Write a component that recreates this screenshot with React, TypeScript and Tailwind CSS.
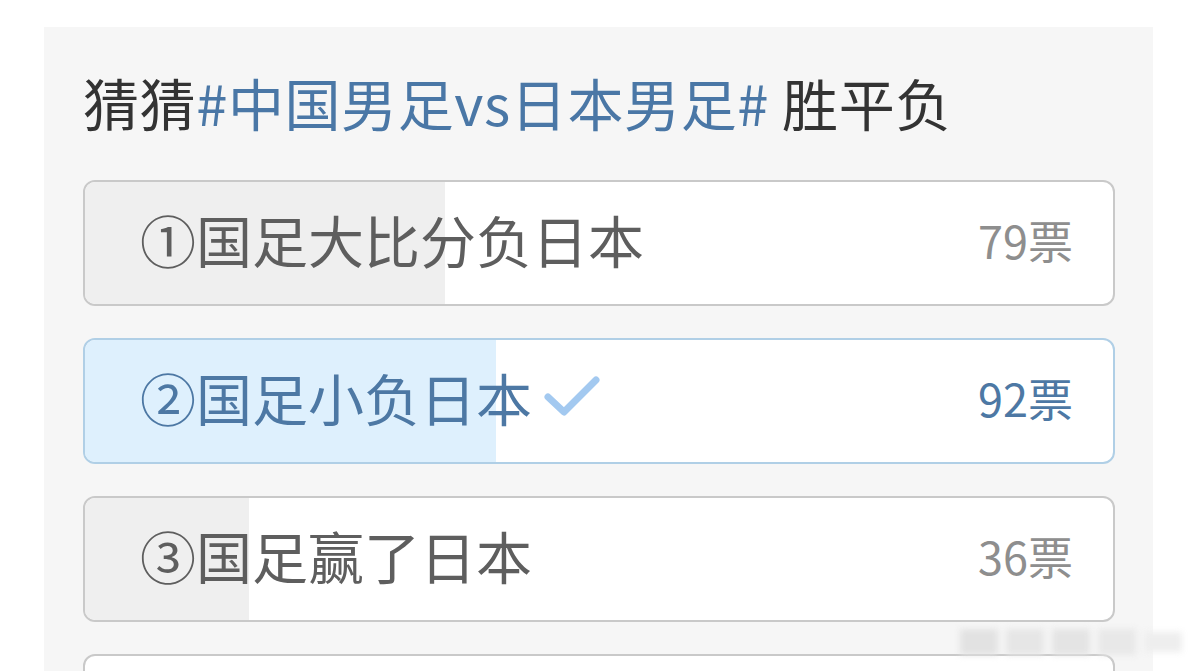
import React from "react";

const font = { fontFamily: '"Noto Sans CJK SC", "Noto Sans", sans-serif' };

type Opt = { label: string; count: string; fill: number; selected?: boolean };

const options: Opt[] = [
  { label: "①国足大比分负日本", count: "79票", fill: 360 },
  { label: "②国足小负日本", count: "92票", fill: 411, selected: true },
  { label: "③国足赢了日本", count: "36票", fill: 164 },
];

function Check() {
  return (
    <svg width="56" height="44" viewBox="0 0 56 44" className="ml-[12px] shrink-0">
      <path d="M4 22 L20 37 L52 5" fill="none" stroke="#a3c9f0" strokeWidth="7" strokeLinecap="round" strokeLinejoin="round" />
    </svg>
  );
}

function Option({ o }: { o: Opt }) {
  return (
    <div
      className={`relative h-[126px] shrink-0 overflow-hidden rounded-[12px] border-2 ${
        o.selected ? "border-[#b0cfe6] bg-white" : "border-[#c9c9c9] bg-white"
      }`}
    >
      <div
        className={`absolute inset-y-0 left-0 ${o.selected ? "bg-[#def0fd]" : "bg-[#efefef]"}`}
        style={{ width: o.fill }}
      />
      <div className="relative flex h-full items-center justify-between pb-[8px] pl-[55px] pr-[40px]">
        <div className="flex items-center">
          <span className={`text-[56px] leading-none ${o.selected ? "text-[#4d78a4]" : "text-[#5e5e5e]"}`}>{o.label}</span>
          {o.selected && <Check />}
        </div>
        <span className={`text-[45px] leading-none ${o.selected ? "text-[#4d78a4]" : "text-[#8e8e8e]"}`}>{o.count}</span>
      </div>
    </div>
  );
}

export default function App() {
  return (
    <div className="relative h-[671px] w-[1199px] overflow-hidden bg-white" style={font}>
      <div className="ml-[44px] mt-[27px] flex h-[700px] w-[1109px] flex-col bg-[#f6f6f6] pl-[39px] pr-[38px] pt-[43px]">
        <div className="h-[64px] text-[56px] leading-[64px] tracking-[0.6px] text-[#333333] whitespace-nowrap">
          猜猜<span className="text-[#4a77a6]">#中国男足vs日本男足#</span> 胜平负
        </div>
        <div className="mt-[46px] flex flex-col gap-[32px]">
          {options.map((o) => (
            <Option key={o.label} o={o} />
          ))}
          <div className="h-[126px] shrink-0 rounded-[12px] border-2 border-[#c9c9c9] bg-white" />
        </div>
      </div>
      <div className="absolute left-[960px] top-[624px] flex h-[36px] w-[225px] items-center gap-[8px] blur-[3px]">
        <div className="h-[26px] w-[38px] bg-[#e2e2e2]" />
        <div className="h-[26px] w-[38px] bg-[#e6e6e6]" />
        <div className="h-[26px] w-[38px] bg-[#e4e4e4]" />
        <div className="h-[26px] w-[38px] bg-[#e8e8e8]" />
        <div className="h-[20px] w-[38px] bg-[#eeeeee]" />
      </div>
    </div>
  );
}
